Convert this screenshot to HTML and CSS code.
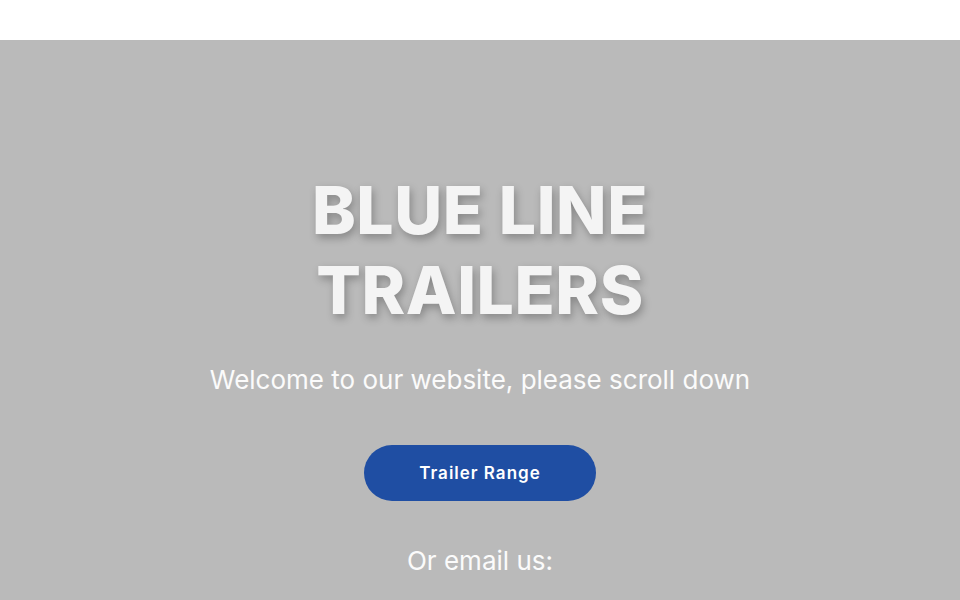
FILE: index.html
```html
<!DOCTYPE html>
<html lang="en">
<head>
<meta charset="utf-8">
<title>Blue Line Trailers</title>
<link rel="stylesheet" href="styles.css">
</head>
<body>
<header class="topbar"></header>
<section class="hero">
  <h1 class="hero-title">BLUE LINE<br>TRAILERS</h1>
  <p class="hero-lead">Welcome to our website, please scroll down</p>
  <a class="hero-button" href="#range">Trailer Range</a>
  <p class="hero-email">Or email us:</p>
</section>
</body>
</html>
```

FILE: styles.css
```css
html, body {
  margin: 0;
  padding: 0;
}

body {
  font-family: Inter, "Noto Sans", sans-serif;
  background: #ffffff;
  color: #ffffff;
}

.topbar {
  height: 40px;
  background: #ffffff;
}

.hero {
  background: #bababa;
  min-height: 560px;
  display: flex;
  flex-direction: column;
  align-items: center;
  padding-top: 130px;
  box-sizing: border-box;
}

.hero-title {
  margin: 0;
  font-size: 66px;
  line-height: 80px;
  font-weight: 800;
  text-align: center;
  color: #f4f4f4;
  letter-spacing: 0.6px;
  text-shadow: 2px 4px 8px rgba(0, 0, 0, 0.28);
}

.hero-lead {
  margin: 34px 0 0;
  font-size: 26px;
  line-height: 32px;
  font-weight: 400;
  color: #fbfbfb;
}

.hero-button {
  margin-top: 49px;
  width: 232px;
  height: 56px;
  border-radius: 28px;
  background: #1f4ea3;
  color: #ffffff;
  text-decoration: none;
  font-size: 17px;
  font-weight: 600;
  letter-spacing: 1px;
  display: flex;
  align-items: center;
  justify-content: center;
}

.hero-email {
  margin: 44px 0 0;
  font-size: 26px;
  line-height: 32px;
  color: #fbfbfb;
}
```
